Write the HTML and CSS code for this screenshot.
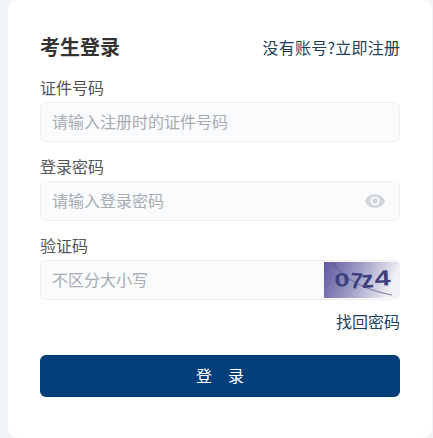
FILE: index.html
```html
<!DOCTYPE html>
<html lang="zh-CN">
<head>
<meta charset="utf-8">
<title>考生登录</title>
<link rel="stylesheet" href="styles.css">
</head>
<body>
<main class="card">
  <header class="head">
    <h1 class="title">考生登录</h1>
    <a class="link link-reg" href="#">没有账号?立即注册</a>
  </header>
  <form class="form">
    <div class="field">
      <label class="label">证件号码</label>
      <div class="box"><input class="input" placeholder="请输入注册时的证件号码"></div>
    </div>
    <div class="field">
      <label class="label">登录密码</label>
      <div class="box">
        <input class="input" placeholder="请输入登录密码">
        <svg class="eye" viewBox="0 0 24 24" width="22" height="22" aria-hidden="true"><path fill="#d2d5d8" d="M12 4.500C7 4.500 2.700 7.600 1 12c1.700 4.400 6 7.500 11 7.500s9.300-3.100 11-7.500c-1.700-4.400-6-7.500-11-7.500zM12 17a5 5 0 1 1 0-10 5 5 0 0 1 0 10zm0-8a3 3 0 1 0 0 6 3 3 0 0 0 0-6z"/></svg>
      </div>
    </div>
    <div class="field">
      <label class="label">验证码</label>
      <div class="box">
        <input class="input" placeholder="不区分大小写">
        <svg class="captcha" viewBox="0 0 75 36" width="75" height="36" aria-hidden="true">
          <defs><linearGradient id="cg" x1="0" y1="0" x2="1" y2="0.2"><stop offset="0" stop-color="#5d58a0"/><stop offset="0.5" stop-color="#a09ec6"/><stop offset="1" stop-color="#f0f0f5"/></linearGradient></defs>
          <rect width="75" height="36" fill="url(#cg)"/>
          <path d="M8 0C20 18 42 28 68 33" fill="none" stroke="#4b4886" stroke-width="0.7"/>
          <text class="cap-text" transform="translate(11 25) rotate(-6) scale(1.25 0.85)">0</text>
          <text class="cap-text" transform="translate(26 26) rotate(4) scale(1 1.02)">7</text>
          <text class="cap-text cap-z" transform="translate(38 26) rotate(-4)">z</text>
          <text class="cap-text" transform="translate(51 24) rotate(-3) scale(1.3 1)">4</text>
        </svg>
      </div>
    </div>
    <div class="forgot"><a class="link" href="#">找回密码</a></div>
    <button class="submit" type="button">登&emsp;录</button>
  </form>
</main>
</body>
</html>
```

FILE: styles.css
```css
html, body { margin: 0; height: 100%; }
body {
  background: #f2f5f7;
  font-family: "Noto Sans CJK SC", "Noto Sans", sans-serif;
  overflow: hidden;
  width: 433px;
  height: 438px;
  box-sizing: border-box;
  padding-left: 8px;
  padding-right: 1px;
}
.card {
  box-sizing: border-box;
  height: 438px;
  background: #fff;
  border-radius: 10px;
  padding: 32px 32px 0;
}
.head {
  display: flex;
  justify-content: space-between;
  align-items: center;
  height: 30px;
}
.title {
  margin: 0;
  font-size: 20px;
  line-height: 30px;
  font-weight: 700;
  color: #333;
}
.link {
  font-size: 16px;
  line-height: 22px;
  color: #1b3f5c;
  text-decoration: none;
}
.link-reg { letter-spacing: 0.25px; margin-right: -0.25px; margin-bottom: 1px; }
.form { display: flex; flex-direction: column; margin-top: 11px; }
.field { display: flex; flex-direction: column; margin-bottom: 10px; }
.label {
  font-size: 16px;
  line-height: 24px;
  color: #555;
  margin: 2px 0 3px;
  height: 24px;
  display: block;
}
.box {
  box-sizing: border-box;
  height: 40px;
  display: flex;
  align-items: center;
  background: #f9fbfd;
  border: 1px solid #eef1f4;
  border-radius: 6px;
}
.input {
  box-sizing: border-box;
  flex: 1;
  min-width: 0;
  height: 100%;
  border: 0;
  outline: 0;
  background: transparent;
  padding: 0 11px 2px;
  font: inherit;
  font-size: 16px;
}
.input::placeholder { color: #a8acb1; opacity: 1; }
.eye { flex: none; margin-right: 13px; }
.captcha { flex: none; }
.cap-text {
  font-family: "Liberation Sans", sans-serif;
  font-size: 22px;
  font-weight: 700;
  fill: #3d3f7e;
}
.cap-z { font-size: 24px; }
.forgot {
  display: flex;
  justify-content: flex-end;
  height: 24px;
}
.submit {
  margin-top: 21px;
  height: 42px;
  border: 0;
  border-radius: 6px;
  background: #043f7c;
  color: #fff;
  font: inherit;
  font-size: 16px;
  padding: 0 0 3px;
}
```
